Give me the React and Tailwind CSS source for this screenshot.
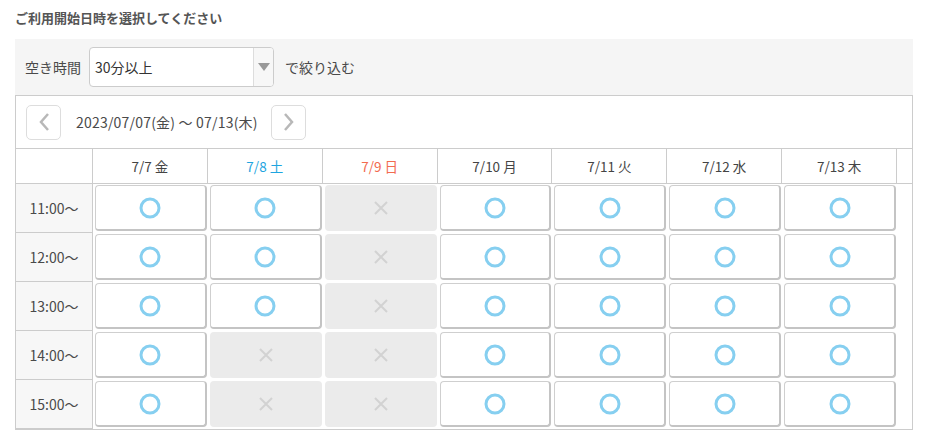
import React from 'react'

const font = { fontFamily: '"Noto Sans CJK JP", "Noto Sans", sans-serif' }

const days = [
    { label: '7/7 金', color: 'text-[#444]' },
    { label: '7/8 土', color: 'text-[#1ea5e0]' },
    { label: '7/9 日', color: 'text-[#f26b4f]' },
    { label: '7/10 月', color: 'text-[#444]' },
    { label: '7/11 火', color: 'text-[#444]' },
    { label: '7/12 水', color: 'text-[#444]' },
    { label: '7/13 木', color: 'text-[#444]' },
]

const times = ['11:00〜', '12:00〜', '13:00〜', '14:00〜', '15:00〜']

const isOpen = (day, row) => {
    if (day === 2) return false
    if (day === 1 && row >= 3) return false
    return true
}

const Circle = () => (
    <svg width="22" height="22" viewBox="0 0 22 22">
        <circle cx="11" cy="11" r="9" fill="none" stroke="#86cff0" strokeWidth="3" />
    </svg>
)

const Cross = () => (
    <svg width="16" height="16" viewBox="0 0 16 16">
        <path d="M2 2 L14 14 M14 2 L2 14" stroke="#d2d2d2" strokeWidth="2" />
    </svg>
)

const Slot = ({ open }) => (
    <div className="h-[49px] pt-[1px] pb-[2px] pl-[2px] pr-[1px]">
        {open ? (
            <button className="w-full h-full bg-white border border-[#cfcfcf] border-r-2 border-b-2 border-r-[#c4c4c4] border-b-[#c4c4c4] rounded-[4px] flex items-center justify-center">
                <Circle />
            </button>
        ) : (
            <div className="w-full h-full bg-[#ebebeb] rounded-[4px] flex items-center justify-center">
                <Cross />
            </div>
        )}
    </div>
)

export default function App() {
    return (
        <div className="w-[928px] h-[430px] overflow-hidden bg-white text-[#4a4a4a]" style={font}>
            <div className="px-[15px]">
                <h2 className="pt-[8px] h-[39px] text-[13px] font-bold text-[#555] leading-[20px]">ご利用開始日時を選択してください</h2>

                <div className="bg-[#f5f5f5] h-[56px] flex items-center px-[10px] gap-[6px]">
                    <span className="text-[14px] text-[#4a4a4a]">空き時間</span>
                    <div className="ml-[2px] w-[185px] h-[40px] bg-white border border-[#cccccc] rounded-[4px] flex items-stretch overflow-hidden">
                        <div className="flex-1 flex items-center pl-[5px] text-[14px] text-[#333]">30分以上</div>
                        <div className="w-[20px] border-l border-[#dddddd] bg-[#f7f7f7] flex items-center justify-center">
                            <svg width="12" height="8" viewBox="0 0 12 8">
                                <path d="M0 0 L12 0 L6 8 Z" fill="#999999" />
                            </svg>
                        </div>
                    </div>
                    <span className="ml-[5px] text-[14px] text-[#4a4a4a]">で絞り込む</span>
                </div>

                <div className="border border-[#cccccc] w-[898px]">
                    <div className="h-[52px] flex items-center pl-[10px]">
                        <button className="w-[35px] h-[35px] border border-[#dddddd] rounded-[5px] flex items-center justify-center bg-white">
                            <svg width="12" height="20" viewBox="0 0 12 20">
                                <path d="M10 2 L3 10 L10 18" fill="none" stroke="#b8b8b8" strokeWidth="2.5" />
                            </svg>
                        </button>
                        <span className="ml-[15px] w-[195px] text-[14px] tracking-[0.2px] text-[#4a4a4a]">2023/07/07(金) 〜 07/13(木)</span>
                        <button className="w-[35px] h-[35px] border border-[#dddddd] rounded-[5px] flex items-center justify-center bg-white">
                            <svg width="12" height="20" viewBox="0 0 12 20">
                                <path d="M2 2 L9 10 L2 18" fill="none" stroke="#b8b8b8" strokeWidth="2.5" />
                            </svg>
                        </button>
                    </div>

                    <div className="grid grid-cols-[77px_repeat(7,minmax(0,1fr))_15px] border-t border-[#cccccc]">
                        <div className="h-[35px] border-r border-b border-[#cccccc] bg-white"></div>
                        {days.map((d) => (
                            <div key={d.label} className={`h-[35px] border-r border-b border-[#cccccc] flex items-center justify-center text-[13.5px] ${d.color}`}>
                                {d.label}
                            </div>
                        ))}
                        <div className="h-[35px] border-b border-[#cccccc]"></div>

                        {times.map((t, r) => (
                            <React.Fragment key={t}>
                                <div className="h-[49px] bg-[#f7f7f7] border-r border-b border-[#cccccc] flex items-center justify-center text-[14px] text-[#4a4a4a]">
                                    {t}
                                </div>
                                {days.map((d, i) => (
                                    <Slot key={d.label} open={isOpen(i, r)} />
                                ))}
                                <div className="h-[49px]"></div>
                            </React.Fragment>
                        ))}
                    </div>
                </div>
            </div>
        </div>
    )
}
